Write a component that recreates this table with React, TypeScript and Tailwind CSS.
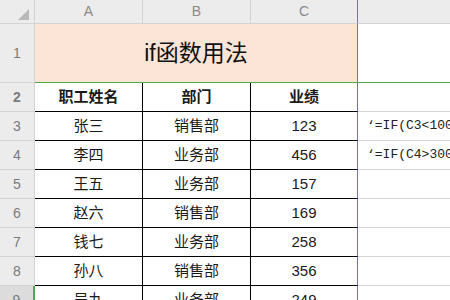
const rows = [
  { n: 3, name: '张三', dept: '销售部', score: '123', formula: '‘=IF(C3<100,"不合格","合格")' },
  { n: 4, name: '李四', dept: '业务部', score: '456', formula: '‘=IF(C4>300,"优秀","一般")' },
  { n: 5, name: '王五', dept: '业务部', score: '157', formula: '' },
  { n: 6, name: '赵六', dept: '销售部', score: '169', formula: '' },
  { n: 7, name: '钱七', dept: '业务部', score: '258', formula: '' },
  { n: 8, name: '孙八', dept: '销售部', score: '356', formula: '' },
  { n: 9, name: '吴九', dept: '业务部', score: '249', formula: '' },
];

const font = { fontFamily: '"Liberation Sans", "Noto Sans CJK SC", sans-serif' };

function RowHead({ n, selected }: { n: number; selected?: boolean }) {
  return (
    <div
      className={`w-[35px] shrink-0 flex items-center justify-center border-r border-b border-[#d4d4d4] text-[14px] text-[#7a7a7a] ${selected ? 'bg-[#dcdcdc] border-r-2 border-r-[#4caa4c]' : 'bg-[#ececec]'}`}
    >
      {n}
    </div>
  );
}

export default function App() {
  return (
    <div className="w-[450px] h-[300px] overflow-hidden bg-white text-[#1a1a1a]" style={font}>
      {/* column header */}
      <div className="flex h-[24px] bg-[#ececec] text-[14px] text-[#8a8a8a]">
        <div className="w-[35px] shrink-0 relative border-r border-b border-[#d4d4d4]">
          <svg className="absolute left-[18px] top-[9px]" width="11" height="11" viewBox="0 0 11 11">
            <polygon points="11,0 11,11 0,11" fill="#b8b8b8" />
          </svg>
        </div>
        <div className="w-[108px] shrink-0 flex items-center justify-center border-r border-b border-[#d4d4d4]">A</div>
        <div className="w-[108px] shrink-0 flex items-center justify-center border-r border-b border-[#d4d4d4]">B</div>
        <div className="w-[107px] shrink-0 flex items-center justify-center border-r border-r-[#4f9a4f] border-b border-b-[#d4d4d4]">C</div>
        <div className="flex-1 border-b border-[#d4d4d4]" />
      </div>

      {/* row 1: title */}
      <div className="flex h-[59px]">
        <div className="w-[35px] shrink-0 flex items-center justify-center border-r border-b border-[#d4d4d4] bg-[#ececec] text-[14px] text-[#7a7a7a]">
          1
        </div>
        <div className="w-[323px] shrink-0 flex items-center justify-center bg-[#fce4d6] border-r border-r-[#4f9a4f] border-b border-b-[#4caa4c] text-[23px] text-[#111]">
          if函数用法
        </div>
        <div className="flex-1 border-b border-[#4caa4c]" />
      </div>

      {/* row 2: headings */}
      <div className="flex h-[29px] text-[15px] font-bold">
        <RowHead n={2} />
        <div className="w-[108px] shrink-0 flex items-center justify-center border-r border-b border-black">职工姓名</div>
        <div className="w-[108px] shrink-0 flex items-center justify-center border-r border-b border-black">部门</div>
        <div className="w-[107px] shrink-0 flex items-center justify-center border-r border-r-[#4f9a4f] border-b border-b-black">业绩</div>
        <div className="flex-1 border-b border-[#d4d4d4]" />
      </div>

      {rows.map((r) => (
        <div key={r.n} className="flex h-[29px] text-[15px]">
          <RowHead n={r.n} selected={r.n === 9} />
          <div className="w-[108px] shrink-0 flex items-center justify-center border-r border-b border-black">{r.name}</div>
          <div className="w-[108px] shrink-0 flex items-center justify-center border-r border-b border-black">{r.dept}</div>
          <div className="w-[107px] shrink-0 flex items-center justify-center border-r border-r-[#4f9a4f] border-b border-b-black">
            {r.score}
          </div>
          <div className="flex-1 min-w-0 flex items-center pl-[9px] border-b border-[#d4d4d4] overflow-hidden">
            <span className="whitespace-nowrap text-[13px] text-[#222]" style={{ fontFamily: '"Liberation Mono", "Noto Sans CJK SC", monospace' }}>
              {r.formula}
            </span>
          </div>
        </div>
      ))}
    </div>
  );
}
